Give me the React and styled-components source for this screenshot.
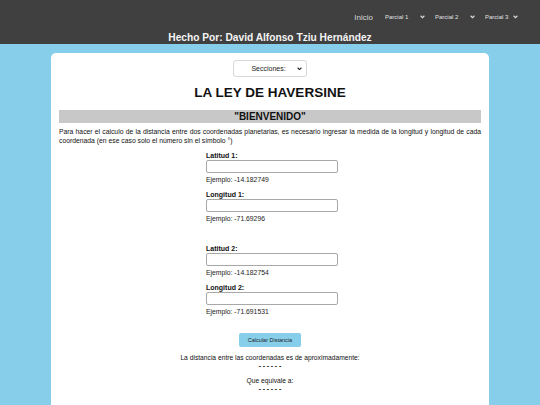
import React from "react";
import styled, { createGlobalStyle } from "styled-components";

const GlobalStyle = createGlobalStyle`
  body {
    margin: 0;
    background: #87ceeb;
    font-family: "Liberation Sans", Arial, sans-serif;
  }
`;

const Header = styled.header`
  background: #404040;
  height: 44px;
  box-sizing: border-box;
  padding-top: 11px;
`;

const Nav = styled.nav`
  display: flex;
  justify-content: flex-end;
  align-items: center;
  gap: 10px;
  padding-right: 22px;
  height: 12px;
`;

const NavLink = styled.a`
  color: #d8d8d8;
  font-size: 8px;
  text-decoration: none;
  margin-right: 2px;
`;

const Dropdown = styled.label`
  display: flex;
  align-items: center;
  width: ${(p) => p.$w}px;
  color: ${(p) => (p.$light ? "#e0e0e0" : "#222")};
`;

const NavSelect = styled.select`
  appearance: none;
  flex: 1;
  min-width: 0;
  background: transparent;
  border: none;
  color: inherit;
  font-family: "Liberation Sans", Arial, sans-serif;
  font-size: 6px;
  padding: 0;
  outline: none;
`;

const Chevron = ({ size = 5 }) => (
  <svg width={size} height={size * 0.7} viewBox="0 0 8 5.6" fill="none">
    <path d="M1 1.2 L4 4.2 L7 1.2" stroke="currentColor" strokeWidth="1.7" />
  </svg>
);

const Author = styled.h1`
  margin: 9px 0 0;
  color: #f4f4f4;
  font-size: 10.2px;
  line-height: 12px;
  font-weight: bold;
  text-align: center;
`;

const Card = styled.main`
  width: 438px;
  box-sizing: border-box;
  margin: 9px auto 0;
  background: #ffffff;
  border-radius: 5px;
  padding: 7px 8px 20px;
  text-align: center;
  color: #111;
`;

const SectionBox = styled.label`
  display: flex;
  align-items: center;
  width: 74px;
  height: 17px;
  box-sizing: border-box;
  margin: 0 auto;
  padding: 0 4px 0 6px;
  border: 1px solid #d8d8d8;
  border-radius: 3px;
  background: #fff;
  color: #222;
`;

const SectionSelect = styled.select`
  appearance: none;
  flex: 1;
  min-width: 0;
  border: none;
  background: transparent;
  font-family: "Liberation Sans", Arial, sans-serif;
  font-size: 7px;
  text-align: center;
  color: #222;
  padding: 0;
  outline: none;
`;

const Title = styled.h2`
  margin: 8px 0 9px;
  font-size: 13.5px;
  line-height: 16px;
  font-weight: bold;
`;

const Banner = styled.h3`
  margin: 0;
  background: #c8c8c8;
  font-size: 10px;
  font-weight: bold;
  line-height: 13px;
`;

const Intro = styled.p`
  margin: 3.5px 0 7.5px;
  font-size: 6.8px;
  line-height: 9px;
  text-align: justify;
`;

const Form = styled.form`
  width: 132px;
  margin: 0 auto;
  padding-left: 4px;
  text-align: left;
  display: flex;
  flex-direction: column;
`;

const Group = styled.div`
  display: flex;
  flex-direction: column;
  margin-bottom: ${(p) => p.$gap}px;
`;

const Label = styled.label`
  font-size: 7px;
  font-weight: bold;
  line-height: 8px;
`;

const Input = styled.input`
  box-sizing: border-box;
  width: 132px;
  height: 13px;
  border: 1px solid #a8a8a8;
  border-radius: 2px;
  padding: 0 3px;
`;

const Hint = styled.span`
  font-size: 6.8px;
  line-height: 9px;
  margin-top: 2px;
  color: #222;
`;

const Button = styled.button`
  align-self: center;
  margin: 17px 0 0 -4px;
  width: 62px;
  height: 14px;
  border: none;
  border-radius: 2px;
  background: #87ceeb;
  font-family: "Liberation Sans", Arial, sans-serif;
  font-size: 5.5px;
  color: #222;
  padding: 0;
`;

const Result = styled.div`
  font-size: 6.7px;
  line-height: 8px;
  margin-top: ${(p) => p.$top}px;
`;

const Dashes = styled.div`
  font-size: 7px;
  font-weight: bold;
  line-height: 7px;
  letter-spacing: 1.7px;
  padding-left: 1.7px;
`;

const fields = [
  { label: "Latitud 1:", hint: "Ejemplo: -14.182749", gap: 7 },
  { label: "Longitud 1:", hint: "Ejemplo: -71.69296", gap: 22 },
  { label: "Latitud 2:", hint: "Ejemplo: -14.182754", gap: 7 },
  { label: "Longitud 2:", hint: "Ejemplo: -71.691531", gap: 0 },
];

const parciales = [
  { name: "Parcial 1", w: 40 },
  { name: "Parcial 2", w: 40 },
  { name: "Parcial 3", w: 33 },
];

export default function App() {
  return (
    <>
      <GlobalStyle />
      <Header>
        <Nav>
          <NavLink href="#">Inicio</NavLink>
          {parciales.map((p) => (
            <Dropdown key={p.name} $w={p.w} $light>
              <NavSelect>
                <option>{p.name}</option>
              </NavSelect>
              <Chevron size={5} />
            </Dropdown>
          ))}
        </Nav>
        <Author>Hecho Por: David Alfonso Tziu Hernández</Author>
      </Header>
      <Card>
        <SectionBox>
          <SectionSelect>
            <option>Secciones:</option>
          </SectionSelect>
          <Chevron size={5} />
        </SectionBox>
        <Title>LA LEY DE HAVERSINE</Title>
        <Banner>"BIENVENIDO"</Banner>
        <Intro>
          Para hacer el calculo de la distancia entre dos coordenadas planetarias, es
          necesario ingresar la medida de la longitud y longitud de cada coordenada (en ese
          caso solo el número sin el símbolo °)
        </Intro>
        <Form onSubmit={(e) => e.preventDefault()}>
          {fields.map((f) => (
            <Group key={f.label} $gap={f.gap}>
              <Label>{f.label}</Label>
              <Input type="text" />
              <Hint>{f.hint}</Hint>
            </Group>
          ))}
          <Button type="submit">Calcular Distancia</Button>
        </Form>
        <Result $top={7}>La distancia entre las coordenadas es de aproximadamente:</Result>
        <Dashes>------</Dashes>
        <Result $top={8}>Que equivale a:</Result>
        <Dashes>------</Dashes>
      </Card>
    </>
  );
}
